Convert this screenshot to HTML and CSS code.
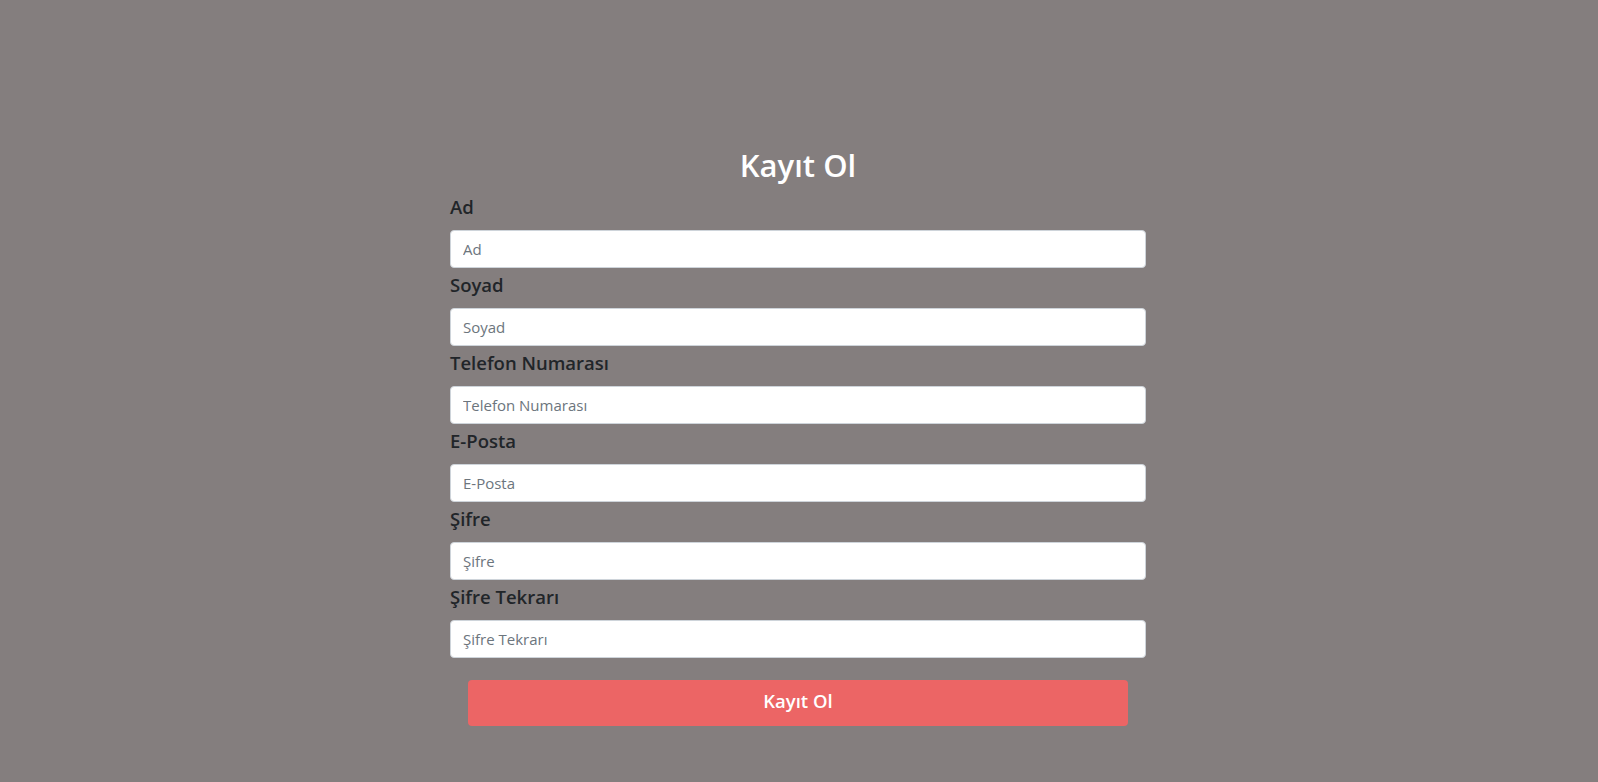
FILE: index.html
```html
<!DOCTYPE html>
<html lang="tr">
<head>
<meta charset="utf-8">
<title>Kayıt Ol</title>
<link rel="stylesheet" href="styles.css">
</head>
<body>
<main class="page">
  <form class="register">
    <h2 class="title">Kayıt Ol</h2>
    <label class="field-label" for="ad">Ad</label>
    <input class="field-input" id="ad" type="text" placeholder="Ad">
    <label class="field-label" for="soyad">Soyad</label>
    <input class="field-input" id="soyad" type="text" placeholder="Soyad">
    <label class="field-label" for="tel">Telefon Numarası</label>
    <input class="field-input" id="tel" type="text" placeholder="Telefon Numarası">
    <label class="field-label" for="eposta">E-Posta</label>
    <input class="field-input" id="eposta" type="text" placeholder="E-Posta">
    <label class="field-label" for="sifre">Şifre</label>
    <input class="field-input" id="sifre" type="text" placeholder="Şifre">
    <label class="field-label" for="sifre2">Şifre Tekrarı</label>
    <input class="field-input" id="sifre2" type="text" placeholder="Şifre Tekrarı">
    <button class="submit" type="button">Kayıt Ol</button>
  </form>
</main>
</body>
</html>
```

FILE: styles.css
```css
html, body {
  margin: 0;
  padding: 0;
}
body {
  background: #847e7e;
  font-family: "Open Sans", "Noto Sans", "Liberation Sans", sans-serif;
  color: #212529;
  min-height: 782px;
}
.page {
  display: flex;
  justify-content: center;
  padding-top: 146px;
  padding-right: 2px;
}
.register {
  width: 696px;
  display: flex;
  flex-direction: column;
}
.title {
  margin: 0 0 6px;
  font-size: 31px;
  line-height: 38px;
  font-weight: 600;
  color: #ffffff;
  text-align: center;
}
.field-label {
  display: block;
  margin: 2px 0 8px;
  font-size: 18.5px;
  line-height: 30px;
  font-weight: 600;
  color: #212529;
}
.field-input {
  box-sizing: border-box;
  display: block;
  width: 100%;
  height: 38px;
  margin: 0;
  padding: 6px 12px;
  font-family: inherit;
  font-size: 15px;
  color: #495057;
  background: #ffffff;
  border: 1px solid #ced4da;
  border-radius: 4px;
  outline: none;
}
.field-input::placeholder {
  color: #6c757d;
  opacity: 1;
}
.submit {
  box-sizing: border-box;
  margin: 22px 18px 0;
  height: 46px;
  padding: 6px 12px 10px;
  border: none;
  border-radius: 4px;
  background: #ec6565;
  color: #ffffff;
  font-family: inherit;
  font-size: 18.5px;
  line-height: 30px;
  font-weight: 600;
  cursor: pointer;
}
```
